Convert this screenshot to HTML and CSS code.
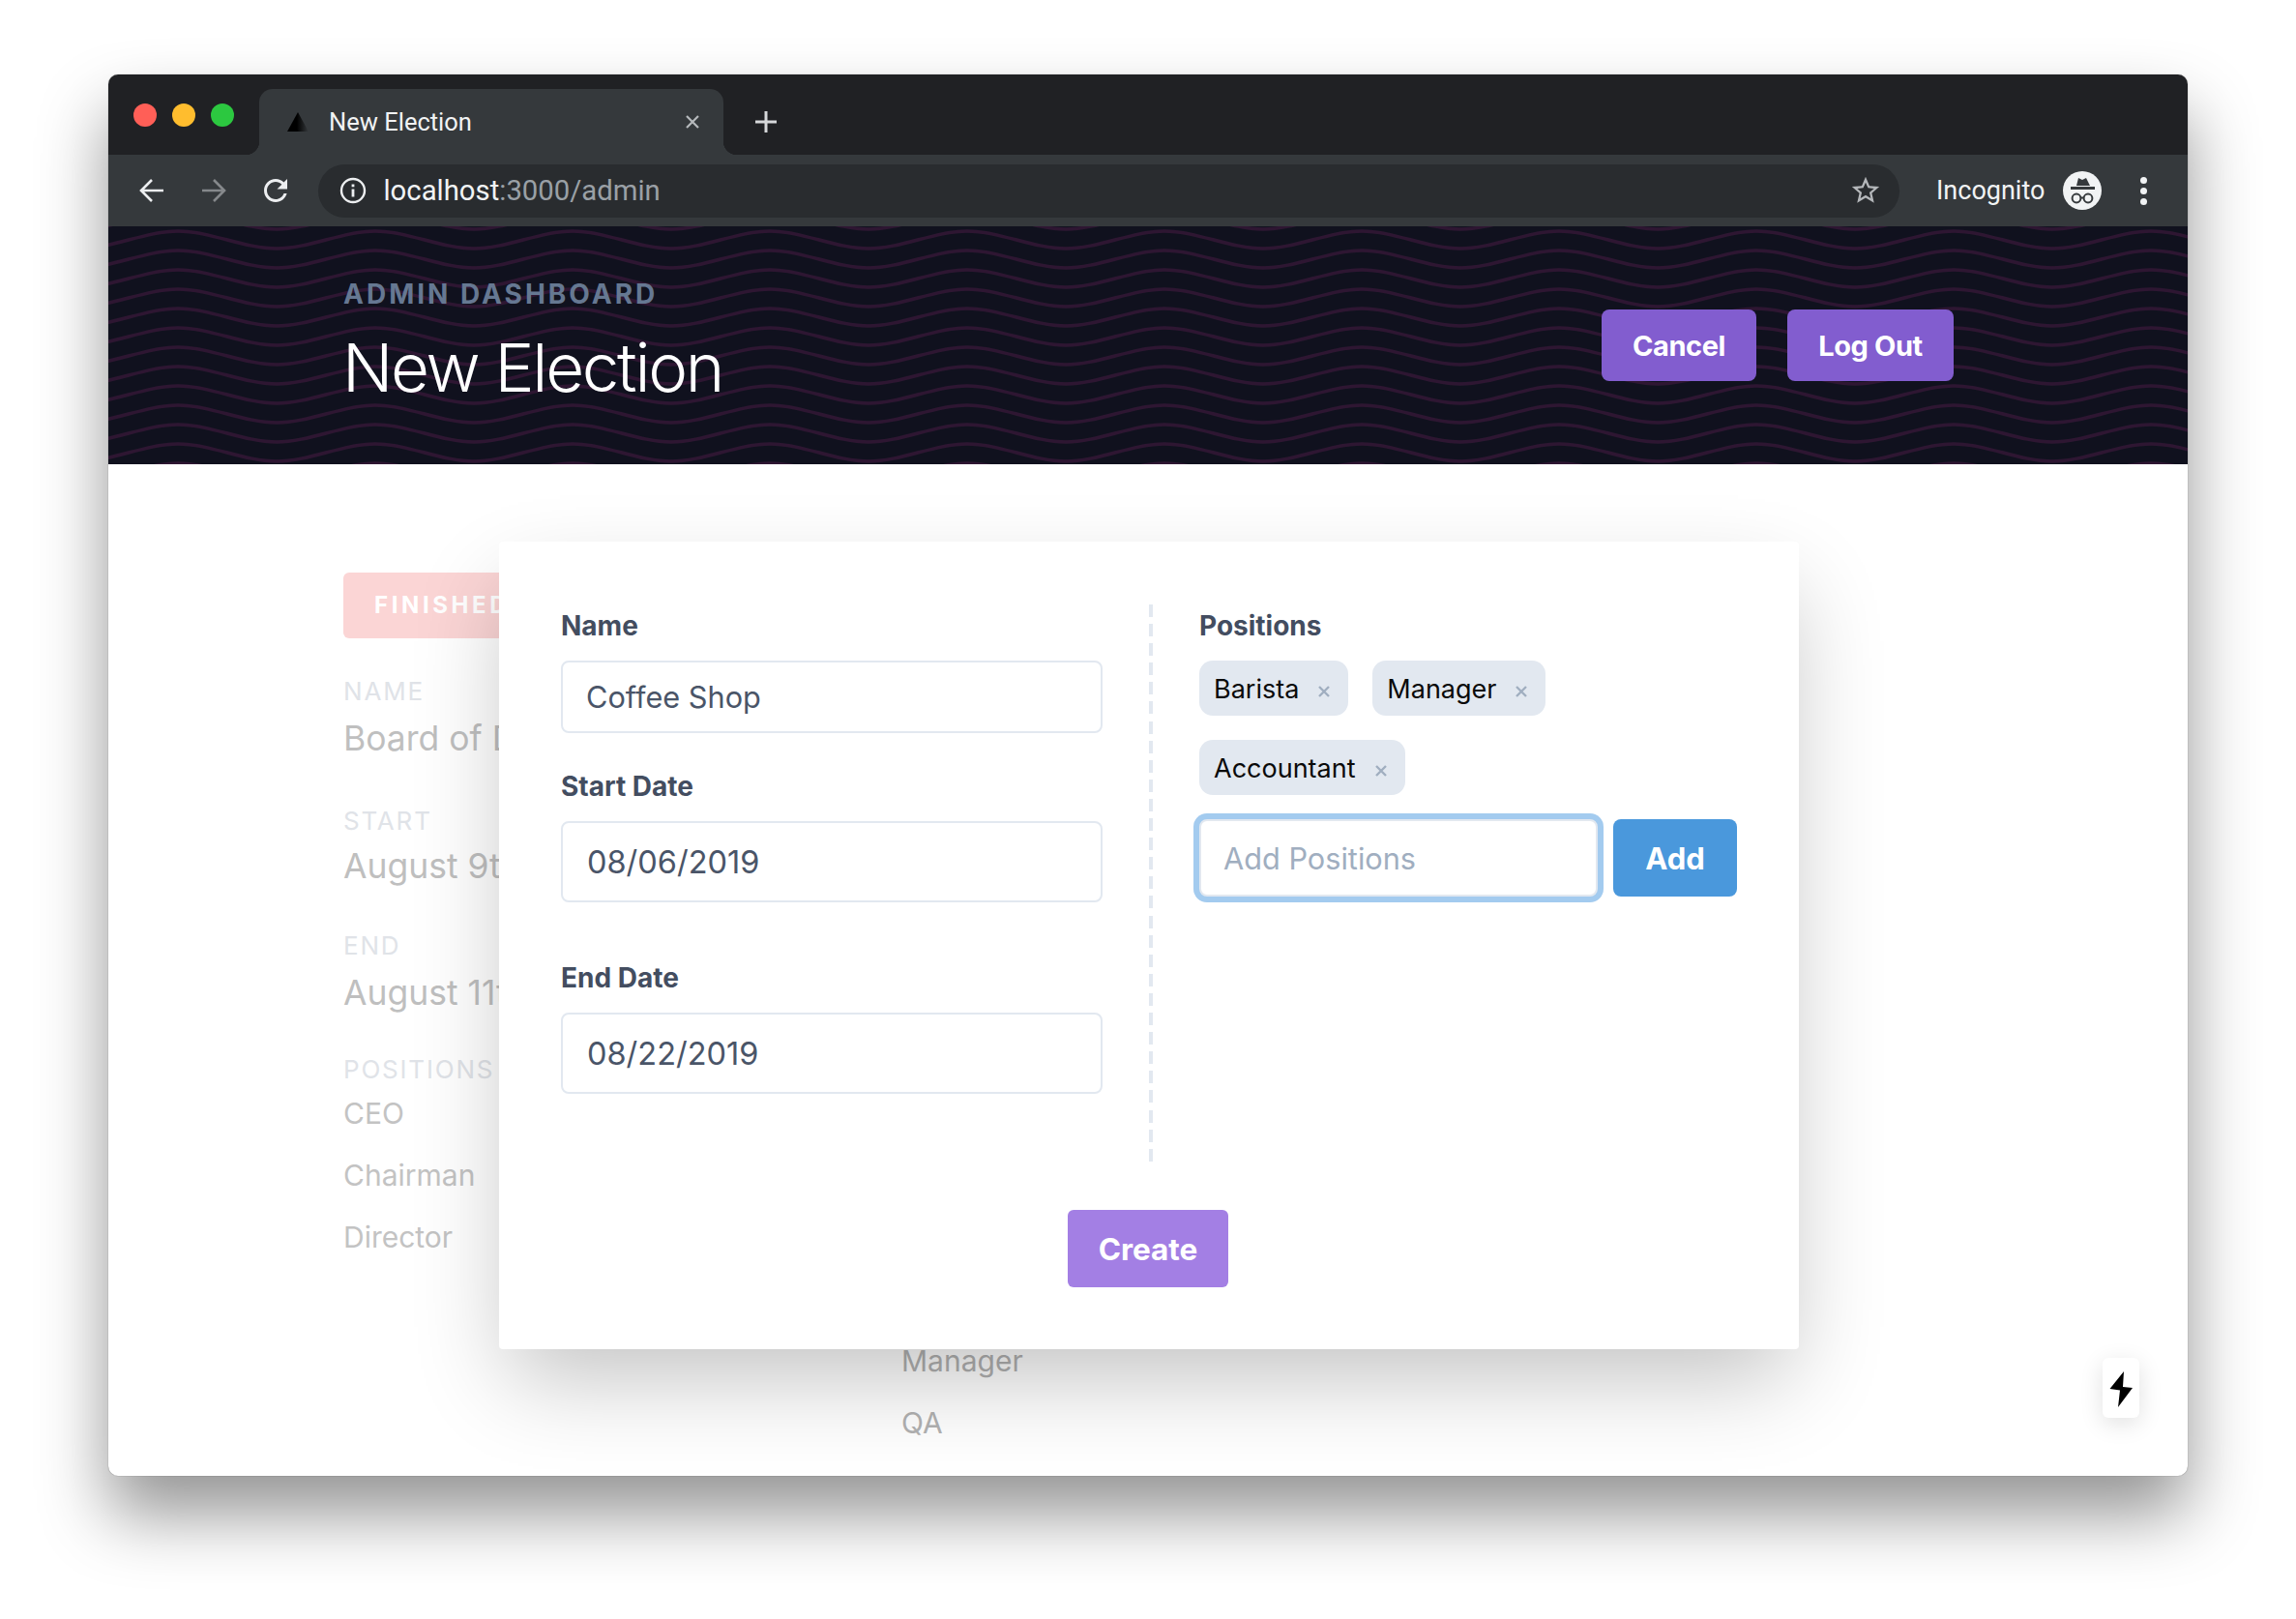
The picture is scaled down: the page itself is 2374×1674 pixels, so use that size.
FILE: index.html
```html
<!DOCTYPE html>
<html>
<head>
    <title>New Election</title>
    <link rel="stylesheet" href="styles.css">
</head>
<body>
    <div class="window">
        <div class="tabstrip">
            <div class="lights">
                <span class="light red"></span>
                <span class="light yellow"></span>
                <span class="light green"></span>
            </div>
            <div class="tab">
                <svg class="favicon" width="22" height="20" viewBox="0 0 22 20">
                    <defs>
                        <linearGradient id="favfade" x1="0" x2="1" y1="0" y2="0">
                            <stop offset="0.45" stop-color="#000"/>
                            <stop offset="1" stop-color="#35393c"/>
                        </linearGradient>
                    </defs>
                    <polygon points="11,0 22,20 0,20" fill="url(#favfade)"/>
                </svg>
                <span class="tab-title">New Election</span>
                <svg class="tab-close" width="16" height="16" viewBox="0 0 16 16">
                    <path d="M2 2L14 14M14 2L2 14" stroke="#b6b9bc" stroke-width="2.2"/>
                </svg>
            </div>
            <svg class="new-tab" width="24" height="24" viewBox="0 0 24 24">
                <path d="M12 1V23M1 12H23" stroke="#d6d8da" stroke-width="3"/>
            </svg>
        </div>

        <div class="toolbar">
            <svg class="nav-icon" width="26" height="26" viewBox="0 0 26 26">
                <path d="M25 13H2M13 2L2 13L13 24" fill="none" stroke="#eceef0" stroke-width="2.6"/>
            </svg>
            <svg class="nav-icon" width="26" height="26" viewBox="0 0 26 26">
                <path d="M1 13H24M13 2L24 13L13 24" fill="none" stroke="#85888b" stroke-width="2.6"/>
            </svg>
            <svg class="nav-icon" width="36" height="36" viewBox="0 0 24 24">
                <path fill="#eceef0" d="M17.65 6.35C16.2 4.9 14.21 4 12 4c-4.42 0-7.99 3.58-7.99 8s3.57 8 7.99 8c3.73 0 6.84-2.55 7.73-6h-2.08c-.82 2.33-3.04 4-5.65 4-3.31 0-6-2.69-6-6s2.69-6 6-6c1.66 0 3.14.69 4.22 1.78L13 11h7V4l-2.35 2.35z"/>
            </svg>
            <div class="omnibox">
                <svg width="28" height="28" viewBox="0 0 28 28">
                    <circle cx="14" cy="14" r="12" fill="none" stroke="#eceef0" stroke-width="2.4"/>
                    <rect x="12.6" y="12.5" width="2.8" height="8" fill="#eceef0"/>
                    <rect x="12.6" y="7.5" width="2.8" height="2.8" fill="#eceef0"/>
                </svg>
                <span class="url">localhost<span class="url-rest">:3000/admin</span></span>
                <svg class="star" width="34" height="34" viewBox="0 0 24 24">
                    <path fill="#b4b7ba" d="M22 9.24l-7.19-.62L12 2 9.19 8.63 2 9.24l5.46 4.73L5.82 21 12 17.27 18.18 21l-1.63-7.03L22 9.24zM12 15.4l-3.76 2.27 1-4.28-3.32-2.88 4.38-.38L12 6.1l1.71 4.04 4.38.38-3.32 2.88 1 4.28L12 15.4z"/>
                </svg>
            </div>
            <span class="incognito-label">Incognito</span>
            <svg class="incognito-icon" width="40" height="40" viewBox="0 0 40 40">
                <circle cx="20" cy="20" r="20" fill="#f1f3f4"/>
                <polygon points="14,15 16,7 20,9 24,7 28,15" fill="#35393c"/>
                <rect x="8" y="16" width="25" height="3" fill="#35393c"/>
                <circle cx="14" cy="28" r="4.4" fill="none" stroke="#35393c" stroke-width="2"/>
                <circle cx="26" cy="28" r="4.4" fill="none" stroke="#35393c" stroke-width="2"/>
                <path d="M18 27.5H22" stroke="#35393c" stroke-width="2"/>
            </svg>
            <div class="dots"><span></span><span></span><span></span></div>
        </div>

        <header class="hero">
            <svg class="waves" width="100%" height="100%">
                <defs>
                    <pattern id="wave" width="204" height="20" patternUnits="userSpaceOnUse" patternTransform="translate(72 5)">
                        <g fill="none" stroke="#2e1632" stroke-width="3.4">
                            <path d="M0 -20C34 -20 68 -2 102 -2S170 -20 204 -20"/>
                            <path d="M0 0C34 0 68 18 102 18S170 0 204 0"/>
                            <path d="M0 20C34 20 68 38 102 38S170 20 204 20"/>
                        </g>
                    </pattern>
                </defs>
                <rect width="100%" height="100%" fill="url(#wave)"/>
            </svg>
            <div class="hero-text">
                <div class="eyebrow">ADMIN DASHBOARD</div>
                <h1>New Election</h1>
            </div>
            <div class="hero-actions">
                <button class="btn btn-purple btn-cancel">Cancel</button>
                <button class="btn btn-purple btn-logout">Log Out</button>
            </div>
        </header>

        <main class="content">
            <section class="election">
                <div class="badge">FINISHED</div>
                <div class="meta-label">NAME</div>
                <div class="meta-value">Board of Directors</div>
                <div class="meta-label meta-start">START</div>
                <div class="meta-value">August 9th, 2019</div>
                <div class="meta-label">END</div>
                <div class="meta-value">August 11th, 2019</div>
                <div class="meta-label meta-positions">POSITIONS</div>
                <ul class="positions">
                    <li>CEO</li>
                    <li>Chairman</li>
                    <li>Director</li>
                </ul>
            </section>
            <section class="election election-next">
                <ul class="positions">
                    <li>Manager</li>
                    <li>QA</li>
                </ul>
            </section>

            <div class="modal">
                <div class="modal-cols">
                    <div class="col-left">
                        <label class="field-label">Name</label>
                        <input class="field field-name" type="text" value="Coffee Shop">
                        <label class="field-label label-start">Start Date</label>
                        <input class="field field-date" type="text" value="08/06/2019">
                        <label class="field-label label-end">End Date</label>
                        <input class="field field-date" type="text" value="08/22/2019">
                    </div>
                    <div class="divider"></div>
                    <div class="col-right">
                        <label class="field-label">Positions</label>
                        <div class="tags">
                            <span class="tag">Barista<svg class="tag-x" width="12" height="12" viewBox="0 0 12 12"><path d="M1 1L11 11M11 1L1 11" stroke="#a0aec0" stroke-width="2.4"/></svg></span>
                            <span class="tag">Manager<svg class="tag-x" width="12" height="12" viewBox="0 0 12 12"><path d="M1 1L11 11M11 1L1 11" stroke="#a0aec0" stroke-width="2.4"/></svg></span>
                            <span class="tag">Accountant<svg class="tag-x" width="12" height="12" viewBox="0 0 12 12"><path d="M1 1L11 11M11 1L1 11" stroke="#a0aec0" stroke-width="2.4"/></svg></span>
                        </div>
                        <div class="add-row">
                            <input class="field field-add" type="text" placeholder="Add Positions">
                            <button class="btn btn-add">Add</button>
                        </div>
                    </div>
                </div>
                <div class="modal-footer">
                    <button class="btn btn-create">Create</button>
                </div>
            </div>

            <div class="bolt">
                <svg width="38" height="62" viewBox="0 0 38 62">
                    <polygon points="22,14 7.5,32 18,33.5 16,51 31,31 21,30"/>
                </svg>
            </div>
        </main>
    </div>
</body>
</html>
```

FILE: styles.css
```css
* {
    box-sizing: border-box;
}

html, body {
    margin: 0;
    height: 1674px;
    overflow: hidden;
}

body {
    background-color: #ffffff;
    padding: 77px 0 0 112px;
    font-family: Inter, "Liberation Sans", sans-serif;
}

.window {
    width: 2150px;
    height: 1449px;
    display: flex;
    flex-direction: column;
    background: #ffffff;
    border-radius: 10px;
    overflow: hidden;
    box-shadow: 0 0 1px rgba(0, 0, 0, 0.6), 0 40px 70px rgba(0, 0, 0, 0.42);
}

/* browser chrome */
.tabstrip {
    height: 83px;
    flex: none;
    display: flex;
    align-items: flex-start;
    background: #202124;
    font-family: Roboto, sans-serif;
}

.lights {
    display: flex;
    gap: 16px;
    width: 156px;
    padding: 30px 0 0 26px;
}

.light {
    width: 24px;
    height: 24px;
    border-radius: 50%;
    flex: none;
}

.red { background: #ff5f57; }
.yellow { background: #ffbd2e; }
.green { background: #2cc840; }

.tab {
    position: relative;
    width: 480px;
    height: 68px;
    margin-top: 15px;
    display: flex;
    align-items: center;
    padding: 0 24px 0 29px;
    background: #35393c;
    border-radius: 14px 14px 0 0;
    color: #f1f3f4;
}

.tab::before,
.tab::after {
    content: "";
    position: absolute;
    bottom: 0;
    width: 14px;
    height: 14px;
}

.tab::before {
    left: -14px;
    background: radial-gradient(circle at 0 0, #202124 14px, #35393c 14.5px);
}

.tab::after {
    right: -14px;
    background: radial-gradient(circle at 100% 0, #202124 14px, #35393c 14.5px);
}

.favicon {
    flex: none;
}

.tab-title {
    margin-left: 21px;
    font-size: 25.5px;
    flex: 1;
}

.new-tab {
    margin: 37px 0 0 32px;
}

.toolbar {
    height: 74px;
    flex: none;
    display: flex;
    align-items: center;
    background: #35393c;
    font-family: Roboto, sans-serif;
    color: #f1f3f4;
    padding-left: 31.5px;
}

.nav-icon {
    flex: none;
    margin-right: 38px;
}

.nav-icon + .nav-icon + .nav-icon {
    margin-left: -5px;
    margin-right: 0;
}

.omnibox {
    margin-left: 26px;
    width: 1635px;
    height: 55px;
    flex: none;
    display: flex;
    align-items: center;
    padding: 0 18px 0 22px;
    background: #292c2f;
    border-radius: 28px;
}

.url {
    margin-left: 18px;
    font-size: 29.3px;
    flex: 1;
}

.url-rest {
    color: #9aa0a6;
}

.incognito-label {
    margin-left: 38.5px;
    font-size: 27px;
}

.incognito-icon {
    margin-left: 19px;
    flex: none;
}

.dots {
    margin-left: 40px;
    display: flex;
    flex-direction: column;
    gap: 4px;
}

.dots span {
    width: 7px;
    height: 7px;
    border-radius: 50%;
    background: #f1f3f4;
}

/* page header */
.hero {
    position: relative;
    height: 246px;
    flex: none;
    display: flex;
    justify-content: space-between;
    padding: 0 242px 0 243px;
    background: #10111e;
}

.waves {
    position: absolute;
    left: 0;
    top: 0;
}

.hero-text,
.hero-actions {
    position: relative;
}

.eyebrow {
    margin-top: 52px;
    font-size: 28px;
    line-height: 36px;
    font-weight: 700;
    letter-spacing: 3px;
    color: #667892;
}

h1 {
    margin: 16px 0 0 -1px;
    font-size: 69px;
    line-height: 84px;
    font-weight: 300;
    letter-spacing: -2.3px;
    color: #ffffff;
}

.hero-actions {
    display: flex;
    gap: 32px;
    padding-top: 86px;
}

.btn {
    border: none;
    border-radius: 8px;
    color: #ffffff;
    font-family: Inter, "Liberation Sans", sans-serif;
    font-weight: 700;
    padding: 0;
}

.btn-purple {
    height: 74px;
    font-size: 29px;
    letter-spacing: -0.4px;
    background: #825dcf;
}

.btn-cancel { width: 160px; }
.btn-logout { width: 172px; }

/* faded page behind the dialog */
.content {
    position: relative;
    flex: 1;
    min-height: 0;
    display: flex;
    padding: 112px 0 0 243px;
}

.election {
    width: 577px;
    flex: none;
}

.election-next {
    padding-top: 788px;
}

.badge {
    width: 240px;
    height: 68px;
    line-height: 68px;
    padding-left: 32px;
    border-radius: 6px;
    background: #fbd5d5;
    color: #ffffff;
    font-size: 24px;
    font-weight: 700;
    letter-spacing: 3.6px;
    white-space: nowrap;
    margin-bottom: 37px;
}

.meta-label {
    font-size: 26px;
    line-height: 36px;
    letter-spacing: 1.8px;
    color: #e0e3e8;
}

.meta-start {
    margin: 42px 0 -2px;
}

.meta-positions {
    margin-top: -3px;
}

.meta-value {
    font-size: 35.5px;
    line-height: 50px;
    margin: 6px 0 39px;
    color: #bfbfbf;
    white-space: nowrap;
}

.positions {
    list-style: none;
    margin: -5px 0 0;
    padding: 0;
}

.positions li {
    font-size: 30px;
    line-height: 64px;
    color: #c3c3c3;
}

.election-next .positions li {
    color: #b2b2b2;
}

/* dialog */
.modal {
    position: absolute;
    left: 404px;
    top: 80px;
    width: 1344px;
    height: 835px;
    padding: 65px 0 0 64px;
    background: #ffffff;
    border-radius: 4px;
    box-shadow: 0 40px 90px -10px rgba(0, 0, 0, 0.24);
}

.modal-cols {
    display: flex;
    height: 584px;
}

.col-left {
    width: 560px;
    flex: none;
}

.divider {
    width: 4px;
    flex: none;
    margin: 0 0 8px 48px;
    background: repeating-linear-gradient(to bottom, #e2e8f0 0, #e2e8f0 13px, transparent 13px, transparent 20.1px);
}

.col-right {
    width: 560px;
    margin-left: 48px;
}

.field-label {
    display: block;
    padding-top: 4px;
    height: 40px;
    line-height: 36px;
    margin-bottom: 18px;
    font-size: 28px;
    font-weight: 700;
    color: #434d60;
}

.label-start {
    margin-top: 33px;
}

.label-end {
    margin-top: 56px;
}

.field {
    display: block;
    width: 100%;
    border: 2px solid #e2e8f0;
    border-radius: 8px;
    background: #ffffff;
    color: #4a5568;
    font-family: Inter, "Liberation Sans", sans-serif;
    font-size: 30.7px;
    outline: none;
}

.field-name {
    height: 75px;
    padding: 0 24px;
}

.field-date {
    height: 84px;
    padding: 0 25px;
    font-size: 32.5px;
}

.field-add {
    flex: none;
    width: 412px;
    height: 80px;
    padding: 0 23px;
    box-shadow: 0 0 0 6px #a3cbef;
}

.field-add::placeholder {
    color: #a0aec0;
}

.tags {
    display: flex;
    flex-wrap: wrap;
    gap: 25px;
    width: 420px;
}

.tag {
    height: 57px;
    display: flex;
    align-items: center;
    padding: 2px 19px 0 15px;
    border-radius: 14px;
    background: #e2e8f0;
    color: #0a0a0a;
    font-size: 27px;
}

.tag-x {
    margin: 4px 0 0 20px;
}

.add-row {
    display: flex;
    gap: 16px;
    margin-top: 25px;
}

.btn-add {
    width: 128px;
    height: 80px;
    background: #4a98dc;
    font-size: 31px;
}

.modal-footer {
    display: flex;
    justify-content: center;
    margin: 42px 0 0 -66px;
}

.btn-create {
    width: 166px;
    height: 80px;
    border-radius: 6px;
    background: #a37fe4;
    font-size: 31.5px;
}

.bolt {
    position: absolute;
    right: 50px;
    bottom: 60px;
    width: 38px;
    height: 62px;
    border-radius: 6px;
    background: #ffffff;
    box-shadow: 0 6px 24px rgba(0, 0, 0, 0.12);
}

.bolt svg {
    display: block;
}
```
